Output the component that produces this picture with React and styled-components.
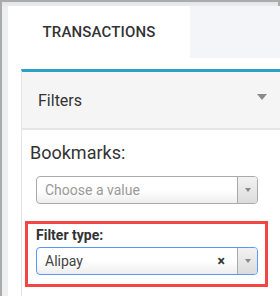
import React from 'react';
import styled, { createGlobalStyle } from 'styled-components';

const GlobalStyle = createGlobalStyle`
  html, body {
    margin: 0;
    padding: 0;
    background: #fff;
    font-family: Roboto, "Liberation Sans", Arial, sans-serif;
  }
`;

const Select = ({ value, placeholder, focused }) => (
  <SelectBox focused={focused}>
    <SelectText muted={!value}>{value || placeholder}</SelectText>
    {value && <Clear>×</Clear>}
    <ArrowCell>
      <Arrow />
    </ArrowCell>
  </SelectBox>
);

const App = () => (
  <>
    <GlobalStyle />
    <Frame>
      <Content>
        <TabBar>
          <Tab>TRANSACTIONS</Tab>
        </TabBar>
        <Body>
          <Panel>
            <PanelHeader>
              Filters
              <Caret />
            </PanelHeader>
            <PanelBody>
              <Label>Bookmarks:</Label>
              <SelectWrap>
                <Select placeholder="Choose a value" />
              </SelectWrap>
              <Highlight>
                <FieldLabel>Filter type:</FieldLabel>
                <Select value="Alipay" focused />
              </Highlight>
            </PanelBody>
          </Panel>
        </Body>
      </Content>
    </Frame>
  </>
);

export default App;

const Frame = styled.div`
  box-sizing: border-box;
  height: 296px;
  border: 2px solid #ababab;
  border-bottom: none;
  background: linear-gradient(#e4e5ea, #eeeff2 6px);
  padding: 4px 0 0 6px;
  display: flex;
`;

const Content = styled.div`
  flex: 1;
  background: #fff;
  display: flex;
  flex-direction: column;
`;

const TabBar = styled.div`
  display: flex;
  height: 52px;
  background: #f4f5f9;
`;

const Tab = styled.div`
  width: 182px;
  background: #fff;
  display: flex;
  align-items: center;
  justify-content: center;
  font-size: 15px;
  font-weight: 500;
  color: #333;
  letter-spacing: 0.15px;
`;

const Body = styled.div`
  flex: 1;
  padding: 11px 5px 0 13px;
  display: flex;
  overflow: hidden;
`;

const Panel = styled.div`
  flex: 1;
  border-top: 3px solid #2ba1c7;
  border-left: 1px solid #e4e4e4;
  border-right: 1px solid #e4e4e4;
`;

const PanelHeader = styled.div`
  height: 58px;
  box-sizing: border-box;
  background: #f5f5f5;
  border-bottom: 2px solid #e6e6e6;
  padding: 0 15px 0 16px;
  display: flex;
  align-items: center;
  justify-content: space-between;
  font-size: 16px;
  color: #333;
`;

const Caret = styled.span`
  width: 0;
  height: 0;
  border-left: 5.5px solid transparent;
  border-right: 5.5px solid transparent;
  border-top: 6px solid #8a8a8a;
  margin-top: -6px;
`;

const PanelBody = styled.div`
  padding: 12px 14px 0 8px;
  display: flex;
  flex-direction: column;
  align-items: flex-start;
`;

const Label = styled.div`
  font-size: 18px;
  line-height: 22px;
  color: #333;
`;

const SelectWrap = styled.div`
  margin: 12px 0 0 6px;
`;

const Highlight = styled.div`
  margin: 17px 0 0 -5px;
  width: 243px;
  box-sizing: border-box;
  border: 3px solid #f44545;
  padding: 2px 0 9px 8px;
`;

const FieldLabel = styled.div`
  font-size: 14px;
  font-weight: 700;
  line-height: 18px;
  color: #333;
  margin-bottom: 3px;
`;

const SelectBox = styled.div`
  width: 222px;
  height: 28px;
  box-sizing: border-box;
  border: 1px solid ${({ focused }) => (focused ? '#5897fb' : '#aaa')};
  border-radius: 4px;
  background: linear-gradient(#fff 50%, #eee);
  display: flex;
  align-items: center;
  overflow: hidden;
`;

const SelectText = styled.span`
  flex: 1;
  padding-left: 8px;
  font-size: 14px;
  color: ${({ muted }) => (muted ? '#999' : '#444')};
`;

const Clear = styled.span`
  font-size: 14px;
  font-weight: 700;
  color: #333;
  margin-right: 12px;
`;

const ArrowCell = styled.div`
  width: 19px;
  height: 100%;
  border-left: 1px solid #aaa;
  background: linear-gradient(#f2f2f2, #dcdcdc);
  display: flex;
  align-items: center;
  justify-content: center;
`;

const Arrow = styled.span`
  width: 0;
  height: 0;
  border-left: 3.5px solid transparent;
  border-right: 3.5px solid transparent;
  border-top: 4px solid #888;
`;
